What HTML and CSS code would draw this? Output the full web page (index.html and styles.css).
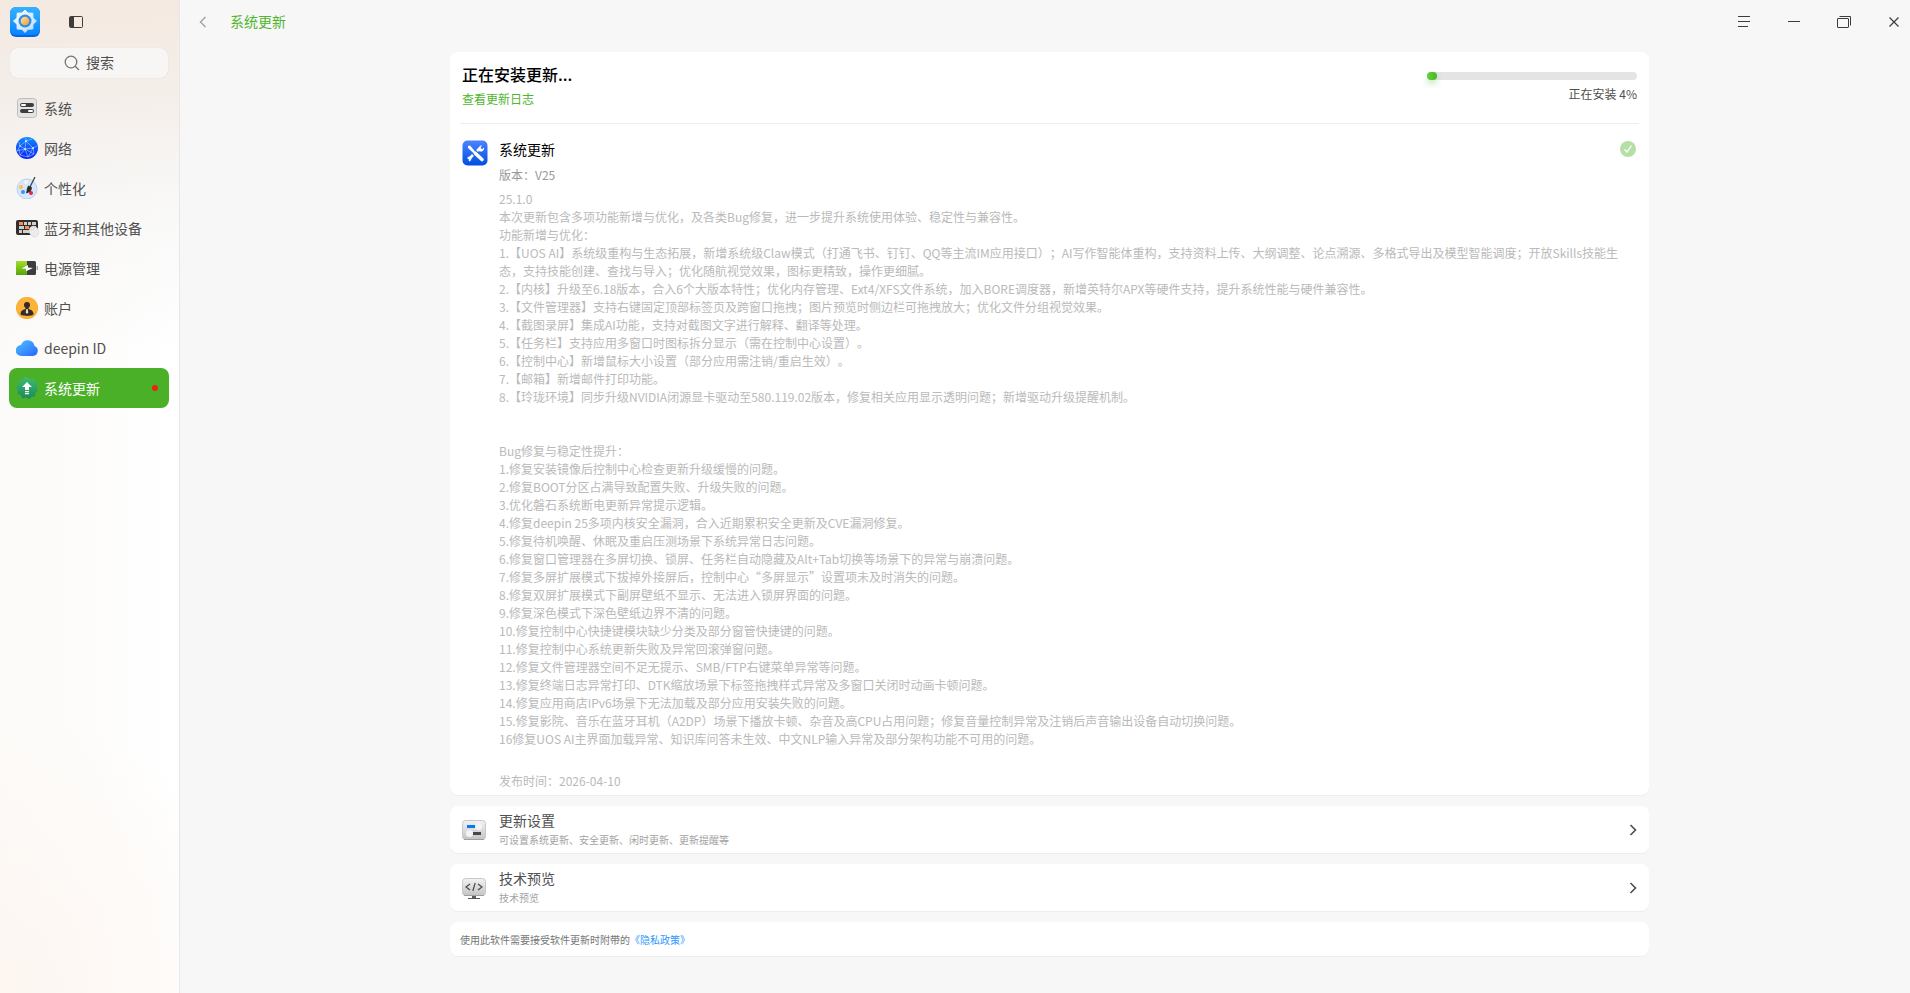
FILE: index.html
```
<!DOCTYPE html>
<html lang="zh-CN">
<head>
    <meta charset="UTF-8">
    <meta name="viewport" content="width=device-width, initial-scale=1.0">
    <title>系统更新</title>
    <link rel="stylesheet" href="styles.css">
</head>
<body>
    <aside class="sidebar">
        <div class="sidebar-top">
            <svg class="logo" width="30" height="30" viewBox="0 0 30 30">
                <defs>
                    <linearGradient id="logoBg" x1="0" y1="0" x2="0" y2="1"><stop offset="0" stop-color="#35b2ff"/><stop offset="1" stop-color="#0a84ff"/></linearGradient>
                    <linearGradient id="logoGear" x1="0" y1="0" x2="1" y2="1"><stop offset="0" stop-color="#fff"/><stop offset="1" stop-color="#b5dcff"/></linearGradient>
                    <linearGradient id="logoDot" x1="0" y1="0" x2="1" y2="1"><stop offset="0" stop-color="#ffe3ae"/><stop offset="1" stop-color="#f59a1c"/></linearGradient>
                </defs>
                <rect width="30" height="30" rx="6" fill="#0565ea"/>
                <rect width="30" height="28" rx="6" fill="url(#logoBg)"/>
                <path d="M15 3l3 3 4.800 .2.200 4.800L26.500 14 23 17.200l-.2 4.800-4.800.2L15 25.500l-3-3.300-4.800-.2-.2-4.800L3.500 14 7 11l.2-4.800L12 6z" fill="url(#logoGear)" stroke="url(#logoGear)" stroke-linejoin="round"/>
                <circle cx="15" cy="14" r="6.500" fill="#2b8df0"/>
                <circle cx="15" cy="14" r="4.300" fill="url(#logoDot)"/>
            </svg>
            <button class="icon-btn" type="button" aria-label="侧边栏">
                <svg width="14" height="12" viewBox="0 0 14 12"><rect x=".5" y=".5" width="13" height="11" rx="1" fill="none" stroke="#3f3c39"/><path d="M1 1h4v10H1z" fill="#3f3c39"/></svg>
            </button>
        </div>
        <label class="search">
            <svg width="16" height="16" viewBox="0 0 16 16" fill="none" stroke="#777572" stroke-width="1.300"><circle cx="7" cy="7" r="5.800"/><path d="M11.200 11.200L15 15"/></svg>
            <input type="text" placeholder="搜索" aria-label="搜索">
        </label>
        <nav class="menu">
            <a class="menu-item" href="#">
                <svg width="22" height="22" viewBox="0 0 22 22">
                    <rect x="1.500" y="1.500" width="19" height="19" rx="3" fill="#e4e4e4" stroke="#bcbcbc"/>
                    <rect x="4" y="6" width="14" height="4" rx="2" fill="#3e3e3e"/><rect x="5" y="7" width="5" height="2" rx="1" fill="#fff"/>
                    <rect x="4" y="12" width="14" height="4" rx="2" fill="#3e3e3e"/><rect x="12" y="13" width="5" height="2" rx="1" fill="#fff"/>
                </svg>
                系统
            </a>
            <a class="menu-item" href="#">
                <svg width="22" height="22" viewBox="0 0 22 22">
                    <defs><linearGradient id="net" x1="0" y1="0" x2="0" y2="1"><stop offset="0" stop-color="#128cff"/><stop offset="1" stop-color="#0a1cf5"/></linearGradient></defs>
                    <circle cx="11" cy="11" r="11" fill="url(#net)"/>
                    <path d="M10 1v3L4 9l-3 5 8-2 8-1 4-2M10 4l7 7 1 6-6 3-3-8L10 4l6-2M4 9l5 3-5 6 8 2 5-9M9 12l9 5M4 18l-1-6M4 9L3 5" fill="none" stroke="#a9cfff" stroke-width=".6"/>
                    <g fill="#d8eaff"><circle cx="10" cy="4" r="1"/><circle cx="9" cy="12" r="1"/><circle cx="17" cy="11" r="1"/><circle cx="4" cy="9" r=".8"/></g>
                </svg>
                网络
            </a>
            <a class="menu-item" href="#">
                <svg width="22" height="22" viewBox="0 0 22 22">
                    <circle cx="11" cy="12" r="10" fill="#d6e7fb" stroke="#b9d2f2"/>
                    <circle cx="10" cy="5" r="2" fill="#f5f5f5"/><circle cx="5" cy="10" r="2" fill="#ffbd45"/><circle cx="7" cy="15" r="2" fill="#3e8dff"/><circle cx="15" cy="16" r="2" fill="#ee1d52"/>
                    <path d="M19 0l-5 10" stroke="#444" stroke-width="1.300"/><path d="M12.500 8.500l3.300 1.700c.5 3-1.800 5.500-5.800 6 1-3 .4-5.500 2.500-7.700z" fill="#2e2e2e"/>
                </svg>
                个性化
            </a>
            <a class="menu-item" href="#">
                <svg width="22" height="22" viewBox="0 0 22 22" overflow="visible">
                    <rect y="3" width="22" height="15" rx="2" fill="#2f2f2f"/>
                    <g fill="#cfcfcf"><path d="M8 5h3v3H8zM12 5h3v3h-3zM16 5h4v3h-4zM3 9h5v3H3zM18 9h2v3h-2zM3 13h3v3H3zM7 13h8v3H7z"/></g>
                    <path d="M3 5h4v3H3zM9 9h4v3H9z" fill="#ff8c4a"/>
                    <ellipse cx="18" cy="14.500" rx="4.600" ry="5.600" transform="rotate(-25 18 14.500)" fill="#ececec" stroke="#d2d2d2" stroke-width=".5"/><path d="M14 13c2 0 4-1 5-3" stroke="#c4c4c4" stroke-width=".6" fill="none"/>
                </svg>
                蓝牙和其他设备
            </a>
            <a class="menu-item" href="#">
                <svg width="22" height="22" viewBox="0 0 22 22">
                    <defs><linearGradient id="bat" x1="0" y1="0" x2="0" y2="1"><stop offset="0" stop-color="#a3df2c"/><stop offset="1" stop-color="#55a508"/></linearGradient></defs>
                    <rect y="4" width="20" height="14" rx="1.500" fill="#3d3d3d"/><path d="M1.500 4H11v14H1.500A1.500 1.500 0 0 1 0 16.500v-11A1.500 1.500 0 0 1 1.500 4z" fill="url(#bat)"/>
                    <rect x="20.500" y="9" width="1.500" height="4" fill="#aaa"/><path d="M11.800 8l-6.300 3.400 4.600.4-.1 2.400 7-3.100-5-.5z" fill="#fff"/>
                </svg>
                电源管理
            </a>
            <a class="menu-item" href="#">
                <svg width="22" height="22" viewBox="0 0 22 22">
                    <circle cx="11" cy="11" r="11" fill="#ffa516"/><circle cx="11" cy="10.500" r="10.500" fill="#fdb23c"/>
                    <circle cx="11" cy="8" r="3" fill="#322c24"/><path d="M9.500 10h3v2c3.200.5 5 2.500 5 5 0 2.500-13 2.500-13 0 0-2.500 1.800-4.500 5-5z" fill="#322c24"/><path d="M10.300 12h1.400l.6 3.500-1.300 1.500-1.300-1.500z" fill="#e8ddcb"/>
                </svg>
                账户
            </a>
            <a class="menu-item" href="#">
                <svg width="22" height="22" viewBox="0 0 22 22">
                    <defs><linearGradient id="cloud" x1="0" y1="0" x2="1" y2="1"><stop offset="0" stop-color="#4fc0ff"/><stop offset="1" stop-color="#2668ff"/></linearGradient></defs>
                    <path d="M5.500 19A5.500 5.500 0 0 1 5 8a7 7 0 0 1 13.500 1A5.200 5.200 0 0 1 17 19z" fill="url(#cloud)"/>
                </svg>
                deepin ID
            </a>
            <a class="menu-item active" href="#">
                <svg width="22" height="22" viewBox="0 0 22 22">
                    <defs><linearGradient id="upd" x1="0" y1="0" x2="0" y2="1"><stop offset="0" stop-color="#3fbb6f"/><stop offset="1" stop-color="#1a8a5c"/></linearGradient></defs>
                    <path d="M11 0l3 2.200 3.500-.8 1.200 3.300 3 2-1 3.300 1.300 3.200-2.500 2.500-.4 3.600-3.600.6L13 22l-3-1.400-3.500.8-1.800-3.100-3.200-1.600.5-3.600L0 10l2.200-2.700.3-3.600L6 3.200 8.300.5z" fill="url(#upd)"/>
                    <path d="M11 5l5 5h-3v3H9v-3H6zM9 14h4v1.300H9zM9 16h4v1.200H9z" fill="#fff"/>
                </svg>
                系统更新
                <span class="dot"></span>
            </a>
        </nav>
    </aside>

    <div class="main">
        <header class="titlebar">
            <button class="icon-btn" type="button" aria-label="返回">
                <svg width="8" height="12" viewBox="0 0 8 12" fill="none" stroke="#a5a5a5" stroke-width="1.500"><path d="M6.500 1L1.500 6l5 5"/></svg>
            </button>
            <span class="crumb">系统更新</span>
            <div class="window-btns">
                <button class="icon-btn" type="button" aria-label="菜单"><svg width="12" height="12" viewBox="0 0 12 12" stroke="#3c3c3c"><path d="M0 .5h12M0 5.500h12M0 10.500h10"/></svg></button>
                <button class="icon-btn" type="button" aria-label="最小化"><svg width="12" height="12" viewBox="0 0 12 12" stroke="#3c3c3c"><path d="M0 5.500h12"/></svg></button>
                <button class="icon-btn" type="button" aria-label="还原"><svg width="14" height="12" viewBox="0 0 14 12" fill="none" stroke="#3c3c3c"><rect x=".5" y="2.500" width="11" height="9" rx=".5"/><path d="M2.500.5h11v9"/></svg></button>
                <button class="icon-btn" type="button" aria-label="关闭"><svg width="10" height="10" viewBox="0 0 10 10" stroke="#3c3c3c" stroke-width="1.200"><path d="M.5.500l9 9M9.500.500l-9 9"/></svg></button>
            </div>
        </header>

        <main class="content">
            <section class="card update-card">
                <div class="update-head">
                    <div>
                        <h1>正在安装更新...</h1>
                        <a class="log-link" href="#">查看更新日志</a>
                    </div>
                    <div class="progress-box">
                        <progress id="installProgress" value="4" max="100"></progress>
                        <label for="installProgress">正在安装 4%</label>
                    </div>
                </div>
                <div class="update-body">
                    <svg class="update-icon" width="26" height="26" viewBox="0 0 26 26">
                        <defs><linearGradient id="tool" x1="0" y1="0" x2="0" y2="1"><stop offset="0" stop-color="#4b83ff"/><stop offset="1" stop-color="#0050e0"/></linearGradient></defs>
                        <rect x=".5" y=".5" width="25" height="25" rx="5" fill="url(#tool)"/>
                        <path d="M7 19l4-4M15 11l3-3" stroke="#fff" stroke-width="2.500"/>
                        <path d="M17 10a3.300 3.300 0 0 1 3-4.700l-1.500 2.500 1.500 1.500L22 7.500a3.300 3.300 0 0 1-5 3.500zM5 18a3 3 0 0 1 4-1 3 3 0 0 1-2 4.500l-.3-2.200z" fill="#fff"/>
                        <path d="M6 6l2-.5 6 7-1.500 1.500L6 8z" fill="#fff"/><path d="M13.500 13.500l6.500 6" stroke="#fff" stroke-width="3.600" stroke-linecap="round"/>
                    </svg>
                    <div class="update-info">
                        <div class="update-title">
                            <h2>系统更新</h2>
                            <svg width="16" height="16" viewBox="0 0 16 16"><circle cx="8" cy="8" r="8" fill="#b5dfa8"/><path d="M4.500 8.500L7 11l4.500-6.500" fill="none" stroke="#fff" stroke-width="1.300"/></svg>
                        </div>
                        <p class="version">版本：V25</p>
                        <div class="log">
                            <p>25.1.0</p>
                            <p>本次更新包含多项功能新增与优化，及各类Bug修复，进一步提升系统使用体验、稳定性与兼容性。</p>
                            <p>功能新增与优化：</p>
                            <p>1.【UOS AI】系统级重构与生态拓展，新增系统级Claw模式（打通飞书、钉钉、QQ等主流IM应用接口）；AI写作智能体重构，支持资料上传、大纲调整、论点溯源、多格式导出及模型智能调度；开放Skills技能生态，支持技能创建、查找与导入；优化随航视觉效果，图标更精致，操作更细腻。</p>
                            <p>2.【内核】升级至6.18版本，合入6个大版本特性；优化内存管理、Ext4/XFS文件系统，加入BORE调度器，新增英特尔APX等硬件支持，提升系统性能与硬件兼容性。</p>
                            <p>3.【文件管理器】支持右键固定顶部标签页及跨窗口拖拽；图片预览时侧边栏可拖拽放大；优化文件分组视觉效果。</p>
                            <p>4.【截图录屏】集成AI功能，支持对截图文字进行解释、翻译等处理。</p>
                            <p>5.【任务栏】支持应用多窗口时图标拆分显示（需在控制中心设置）。</p>
                            <p>6.【控制中心】新增鼠标大小设置（部分应用需注销/重启生效）。</p>
                            <p>7.【邮箱】新增邮件打印功能。</p>
                            <p>8.【玲珑环境】同步升级NVIDIA闭源显卡驱动至580.119.02版本，修复相关应用显示透明问题；新增驱动升级提醒机制。</p>
                        </div>
                        <div class="log bug-log">
                            <p>Bug修复与稳定性提升：</p>
                            <p>1.修复安装镜像后控制中心检查更新升级缓慢的问题。</p>
                            <p>2.修复BOOT分区占满导致配置失败、升级失败的问题。</p>
                            <p>3.优化磐石系统断电更新异常提示逻辑。</p>
                            <p>4.修复deepin 25多项内核安全漏洞，合入近期累积安全更新及CVE漏洞修复。</p>
                            <p>5.修复待机唤醒、休眠及重启压测场景下系统异常日志问题。</p>
                            <p>6.修复窗口管理器在多屏切换、锁屏、任务栏自动隐藏及Alt+Tab切换等场景下的异常与崩溃问题。</p>
                            <p>7.修复多屏扩展模式下拔掉外接屏后，控制中心“多屏显示”设置项未及时消失的问题。</p>
                            <p>8.修复双屏扩展模式下副屏壁纸不显示、无法进入锁屏界面的问题。</p>
                            <p>9.修复深色模式下深色壁纸边界不清的问题。</p>
                            <p>10.修复控制中心快捷键模块缺少分类及部分窗管快捷键的问题。</p>
                            <p>11.修复控制中心系统更新失败及异常回滚弹窗问题。</p>
                            <p>12.修复文件管理器空间不足无提示、SMB/FTP右键菜单异常等问题。</p>
                            <p>13.修复终端日志异常打印、DTK缩放场景下标签拖拽样式异常及多窗口关闭时动画卡顿问题。</p>
                            <p>14.修复应用商店IPv6场景下无法加载及部分应用安装失败的问题。</p>
                            <p>15.修复影院、音乐在蓝牙耳机（A2DP）场景下播放卡顿、杂音及高CPU占用问题；修复音量控制异常及注销后声音输出设备自动切换问题。</p>
                            <p>16修复UOS AI主界面加载异常、知识库问答未生效、中文NLP输入异常及部分架构功能不可用的问题。</p>
                        </div>
                        <p class="log release">发布时间：2026-04-10</p>
                    </div>
                </div>
            </section>

            <a class="card row-card" href="#">
                <svg width="24" height="24" viewBox="0 0 24 24">
                    <defs><linearGradient id="gray" x1="0" y1="0" x2="0" y2="1"><stop offset="0" stop-color="#f3f3f3"/><stop offset="1" stop-color="#c4c4c4"/></linearGradient></defs>
                    <rect x=".5" y="2.500" width="23" height="19" rx="3" fill="url(#gray)" stroke="#c8c8c8"/><path d="M2 21.500h20" stroke="#a0a0a0"/>
                    <path d="M5 7h9v3H5z" fill="#0879f2"/><path d="M11 14h8v3h-8z" fill="#484848"/>
                    <circle cx="16.500" cy="8.500" r="3.500" fill="#f4f4f4"/><circle cx="7.500" cy="15.500" r="3.500" fill="#f4f4f4"/>
                </svg>
                <span class="row-text">
                    <span class="row-title">更新设置</span>
                    <span class="row-desc">可设置系统更新、安全更新、闲时更新、更新提醒等</span>
                </span>
                <svg width="8" height="12" viewBox="0 0 8 12" fill="none" stroke="#4d4d4d" stroke-width="1.600"><path d="M1.500 1l5 5-5 5"/></svg>
            </a>

            <a class="card row-card" href="#">
                <svg width="24" height="24" viewBox="0 0 24 24">
                    <rect x=".5" y="2.500" width="23" height="17" rx="3" fill="url(#gray)" stroke="#c8c8c8"/><path d="M2 19.500h20" stroke="#a0a0a0"/>
                    <path d="M8 8l-4 3 4 3M16 8l4 3-4 3M13.200 7l-2.400 8" fill="none" stroke="#4a4a4a" stroke-width="1.200"/>
                    <path d="M10 20h4v2h4v1H6v-1h4z" fill="#5b5b5b"/>
                </svg>
                <span class="row-text">
                    <span class="row-title">技术预览</span>
                    <span class="row-desc">技术预览</span>
                </span>
                <svg width="8" height="12" viewBox="0 0 8 12" fill="none" stroke="#4d4d4d" stroke-width="1.600"><path d="M1.500 1l5 5-5 5"/></svg>
            </a>

            <p class="card privacy">使用此软件需要接受软件更新时附带的<a href="#">《隐私政策》</a></p>
        </main>
    </div>
</body>
</html>
```
FILE: styles.css
```
* {
    box-sizing: border-box;
}
body {
    margin: 0;
    display: flex;
    min-height: 100vh;
    font-family: "Noto Sans CJK SC", "Noto Sans", sans-serif;
    font-size: 14px;
    line-height: 20px;
    color: #505050;
    background-color: #f7f7f7;
    text-spacing-trim: space-all;
}
h1, h2, p {
    margin: 0;
}
a {
    text-decoration: none;
    color: inherit;
}
svg {
    display: block;
    flex-shrink: 0;
}
.icon-btn {
    display: flex;
    align-items: center;
    justify-content: center;
    width: 32px;
    height: 32px;
    padding: 0;
    border: none;
    background: none;
    cursor: pointer;
}

/* Sidebar */
.sidebar {
    width: 180px;
    flex-shrink: 0;
    padding: 0 10px;
    border-right: 1px solid #e9e7e6;
    background:
        linear-gradient(to bottom, #f4e9e0 0, rgba(243, 237, 232, 0.9) 100px, rgba(246, 245, 244, 0.7) 200px, rgba(255, 255, 255, 0) 350px),
        radial-gradient(circle at 0 100%, #fdf6f1 0, rgba(255, 255, 255, 0) 280px),
        linear-gradient(to right, #fcfaf8, #fff);
}
.sidebar-top {
    display: flex;
    align-items: center;
    gap: 20px;
    height: 44px;
}
.search {
    display: flex;
    align-items: center;
    justify-content: center;
    gap: 6px;
    width: 158px;
    height: 30px;
    margin-top: 4px;
    border-radius: 8px;
    background-color: #f8f6f4;
    box-shadow: 0 0 1px rgba(0, 0, 0, 0.15);
}
.search input {
    field-sizing: content;
    padding: 0 0 2px;
    border: none;
    outline: none;
    background: none;
    font: inherit;
    color: #505050;
}
.search input::placeholder {
    color: #505050;
}
.menu {
    margin: 10px 0 0 -1px;
}
.menu-item {
    display: flex;
    align-items: center;
    gap: 6px;
    width: 160px;
    height: 40px;
    padding: 0 11px 0 7px;
    border-radius: 8px;
}
.menu-item.active {
    color: #fff;
    background-color: #49b027;
}
.dot {
    width: 6px;
    height: 6px;
    margin-left: auto;
    border-radius: 50%;
    background-color: #ee2211;
}

/* Title bar */
.main {
    flex: 1;
    min-width: 0;
}
.titlebar {
    display: flex;
    align-items: center;
    height: 44px;
    padding-left: 7px;
}
.crumb {
    margin-left: 11px;
    padding-bottom: 2px;
    color: #4fb62e;
}
.window-btns {
    display: flex;
    gap: 18px;
    margin-left: auto;
}

/* Content */
.content {
    display: flex;
    flex-direction: column;
    gap: 11px;
    max-width: 1208px;
    margin: 0 auto;
    padding: 8px 0 36px 9px;
}
.card {
    border-radius: 8px;
    background-color: #fff;
    box-shadow: 0 1px 0 rgba(0, 0, 0, 0.04);
}
.update-card {
    padding: 0 10px 5px;
}
.update-head {
    display: flex;
    justify-content: space-between;
    height: 72px;
    padding: 10px 2px 0;
    border-bottom: 1px solid #eee;
}
h1 {
    font-size: 16px;
    line-height: 24px;
    font-weight: 500;
    color: #000;
}
.log-link {
    display: block;
    font-size: 12px;
    line-height: 26px;
    color: #4fb62e;
}
.progress-box {
    display: flex;
    flex-direction: column;
    width: 210px;
    padding-top: 10px;
    gap: 4px;
    text-align: right;
    font-size: 12px;
    color: #505050;
}
progress {
    appearance: none;
    display: block;
    width: 100%;
    height: 8px;
    border: none;
}
progress::-webkit-progress-bar {
    border-radius: 4px;
    background-color: #e4e4e4;
}
progress::-webkit-progress-value {
    min-width: 10px;
    border-radius: 4px;
    background: linear-gradient(to right, #65d13c, #45b820);
    box-shadow: 0 4px 6px rgba(73, 176, 39, 0.3);
}
.update-body {
    display: flex;
    gap: 11px;
    padding: 15px 3px 0 2px;
}
.update-icon {
    margin-top: 1px;
}
.update-info {
    flex: 1;
}
.update-title {
    display: flex;
    align-items: center;
    justify-content: space-between;
}
h2 {
    font-size: 14px;
    line-height: 20px;
    font-weight: 400;
    color: #000;
}
.version {
    margin: 6px 0 5px;
    font-size: 12px;
    color: #999;
}
.log {
    padding-right: 14px;
    font-size: 12px;
    line-height: 18px;
    color: #bababa;
}
.bug-log {
    margin-top: 36px;
}
.release {
    margin-top: 24px;
}
.row-card {
    display: flex;
    align-items: center;
    gap: 13px;
    height: 47px;
    padding: 0 12px;
}
.row-text {
    display: flex;
    flex-direction: column;
    flex: 1;
}
.row-title {
    line-height: 20px;
}
.row-desc {
    font-size: 10px;
    line-height: 20px;
    color: #a3a3a3;
}
.privacy {
    padding: 8px 10px 6px;
    font-size: 10px;
    color: #757575;
}
.privacy a {
    color: #2c97ff;
}
```
